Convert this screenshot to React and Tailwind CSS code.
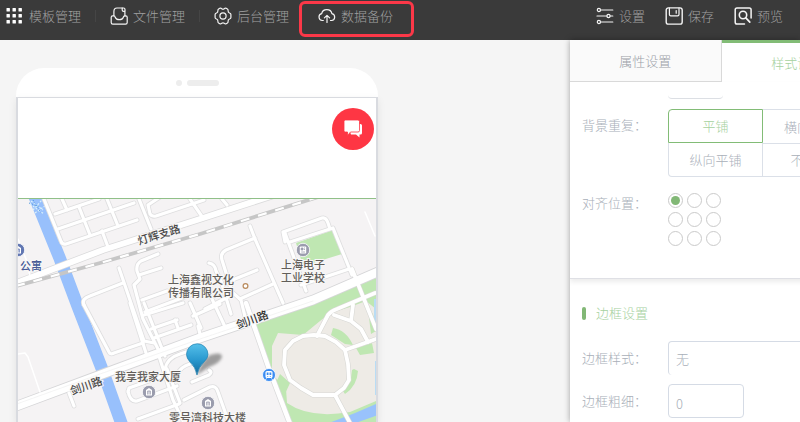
import React from 'react';

const Svg = ({ children }) => (
  <svg viewBox="0 0 18 18" className="size-[18px] shrink-0" fill="none" stroke="#f4f4f4" strokeWidth="1.2" strokeLinecap="round" strokeLinejoin="round" aria-hidden="true">
    {children}
  </svg>
);

const GridIcon = () => (
  <Svg>
    {[1, 7, 13].map((y) => [0, 6, 12].map((x) => (
      <rect key={`${x}-${y}`} x={x + 0.5} y={y} width="3.4" height="3.4" rx="0.5" fill="#fff" stroke="none" />
    )))}
  </Svg>
);
const InboxIcon = () => (
  <Svg>
    <path d="M3.900 8.900H2.600Q1.200 8.900 1.200 10.300V15.600Q1.200 17.200 2.800 17.200H15.600Q17.200 17.200 17.200 15.600V10.300Q17.200 8.900 15.800 8.900H14.800Q13.600 8.900 13.200 10.500Q12.400 12.700 9.300 12.700T5.300 10.500Q5 8.900 3.900 8.900V4.500Q3.900 1 7 1H12.200" />
    <path d="M14.900 8.900V4.800M12.200 1H13.500Q15 1 15 2.500V4.400H13.600Q12.200 4.400 12.200 3Z" />
  </Svg>
);
const GearIcon = () => (
  <Svg>
    <path d="M5.800 1.300Q6.800 0.800 7.700 1.700Q9 2.700 10.300 1.700Q11.200 0.800 12.200 1.300L13.400 2Q14.300 2.600 14.100 3.800Q14 5.400 15.500 6Q16.900 6.400 16.900 7.600V10.400Q16.900 11.600 15.500 12Q14 12.600 14.100 14.200Q14.300 15.400 13.400 16L12.200 16.700Q11.200 17.200 10.300 16.300Q9 15.300 7.700 16.300Q6.800 17.200 5.800 16.700L4.600 16Q3.700 15.400 3.900 14.200Q4 12.600 2.500 12Q1.100 11.600 1.100 10.400V7.600Q1.100 6.400 2.500 6Q4 5.400 3.900 3.800Q3.700 2.600 4.600 2Z" />
    <circle cx="9" cy="9" r="3.100" />
  </Svg>
);
const CloudIcon = () => (
  <Svg>
    <path d="M5.300 13.500H4.300A3.500 3.500 0 0 1 3.700 6.600Q4.400 2.600 8.800 2.600T13.900 6.600A3.500 3.500 0 0 1 13.600 13.500H12.500M9 15.500V8.600M6.400 10.900L9 8.400L11.600 10.900" />
  </Svg>
);
const SlidersIcon = () => (
  <Svg>
    <path d="M4.500 3H16.800M1 9H11M14 9H16.800M4.500 15H16.800" />
    <circle cx="2.900" cy="3" r="1.600" /><circle cx="12.500" cy="9" r="1.600" /><circle cx="2.900" cy="15" r="1.600" />
  </Svg>
);
const SaveIcon = () => (
  <Svg>
    <rect x="1.200" y="0.900" width="16" height="16.200" rx="2.200" strokeWidth="1.400" />
    <path d="M4.400 1.200V7.500Q4.400 8.900 5.800 8.900H12.600Q14 8.900 14 7.500V1.200M11.200 3.500V6.200" />
  </Svg>
);
const PreviewIcon = () => (
  <Svg>
    <path strokeWidth="1.500" d="M10.500 17H3Q1.200 17 1.200 15.200V2.700Q1.200 0.900 3 0.900H15.300Q17.100 0.900 17.100 2.700V11" />
    <circle cx="9" cy="8" r="3.700" strokeWidth="1.600" />
    <path strokeWidth="1.700" d="M11.800 10.900L15.800 15.200" />
  </Svg>
);

const leftNav = [
  { label: '模板管理', Icon: GridIcon, divider: true },
  { label: '文件管理', Icon: InboxIcon, divider: true },
  { label: '后台管理', Icon: GearIcon },
  { label: '数据备份', Icon: CloudIcon, marked: true },
];
const rightNav = [
  { label: '设置', Icon: SlidersIcon },
  { label: '保存', Icon: SaveIcon },
  { label: '预览', Icon: PreviewIcon },
];

function Header() {
  return (
    <header className="flex h-10 shrink-0 items-start justify-between bg-[#3a3a3a] pl-1.5 pr-[17px] text-[#a0a0a0]">
      <nav className="flex">
        {leftNav.map(({ label, Icon, divider, marked }) => (
          <div key={label} className="relative flex h-8 w-[104px] items-center">
            <button className="flex items-center gap-[5px] whitespace-nowrap"><Icon />{label}</button>
            {divider && <span className="ml-auto mr-3.5 h-3 w-px bg-[#454545]" />}
            {marked && <span className="pointer-events-none absolute -left-[19px] top-px h-9 w-[115px] rounded-md border-3 border-[#fb3848]" />}
          </div>
        ))}
      </nav>
      <div className="flex h-8 items-center gap-5">
        {rightNav.map(({ label, Icon }) => (
          <button key={label} className="flex items-center gap-[5px] whitespace-nowrap"><Icon />{label}</button>
        ))}
      </div>
    </header>
  );
}

const minorRoads = [
  'M44 198L61 240Q62 244 66 243L137 219',
  'M62 198L67 209M55 213L99 198M58 228L134 202M79 206L90 234M107 198L118 225M102 230L108 246',
  'M139 198L151 228M160 196L148 204L150 213Q152 216 156 215L204 199M190 198L203 217',
  'M222 198L227 204M217 212L260 198',
  'M119 267L144 340L154 342M84 304Q81 298 90 295L123 282',
  'M158 253L141 260Q136 263 137 270L140 278L134 284L143 318L158 348M161 267L139 274M142 299L167 290M145 311L190 294',
  'M250 225L255 238L283 302M255 237L226 249Q220 252 222 259L232 291L241 299L246 320',
  'M209 262Q215 263 216 270L221 280M257 269L230 280M240 298L273 283M221 280L231 313M205 308L232 294',
  'M285 241L283 231L322 217Q326 216 328 222L330 228M290 241L333 227L352 274M285 232L306 290M301 284L349 268',
  'M84 304L109 351Q110 354 114 352L143 342',
  'M130 302L146 352M144 302L165 355M144 314L183 302M151 328L177 319M154 337L191 324M175 319L178 327M190 302L201 327',
  'M193 315L220 303M198 325L201 337M212 298L227 330',
  'M159 355L173 399L184 422M165 368Q167 357 180 353L192 349M177 374Q180 366 190 363L205 357M192 381L209 374Q213 371 209 369',
  'M69 392L74 405M128 391L129 387L160 376M128 390Q130 401 137 400L177 385M138 418L179 403M184 399L210 386Q216 384 218 391L229 422',
  'M167 368L180 402',
];

const campusRoads = [
  'M303 335L314 334L325 335L336 341L345 349L348 363L349 379L344 387L335 394H313L301 387L290 379L284 364L285 349L293 340Z',
  'M317 335L328 314Q331 310 337 308L375 292M334 314L351 320L361 328L368 341M351 320L353 304M345 349L376 338M352 268L376 328M335 394L350 422',
];

const mapLabels = [
  { x: 168, y: 283, t: '上海鑫视文化' },
  { x: 168, y: 296, t: '传播有限公司' },
  { x: 281, y: 268, t: '上海电子' },
  { x: 281, y: 281, t: '工业学校' },
  { x: 115, y: 380, t: '我享我家大厦' },
  { x: 169, y: 421, t: '零号湾科技大楼' },
];

const Poi = ({ x, y, color = '#9a9cad' }) => (
  <g transform={`translate(${x} ${y})`}>
    <circle r="6.700" fill={color} stroke="#fff" strokeWidth="0.800" />
    <path d="M-3 3.500V-2L0 -4L3 -2V3.500Z" fill="#fff" />
    <path d="M-1.400 2.500V-1H1.400V2.500M0 -1V2.500" stroke={color} strokeWidth="0.800" fill="none" />
  </g>
);

const SchoolPoi = ({ x, y }) => (
  <g transform={`translate(${x} ${y})`}>
    <circle r="6.700" fill="#9a9cad" stroke="#fff" strokeWidth="0.800" />
    <rect x="-3.200" y="-3.600" width="6.400" height="7.200" rx="0.800" fill="#fff" />
    <path d="M-1.800 -2H0V0H-1.800ZM1 -2H2M1 -0.500H2M-1.800 2H2" stroke="#9a9cad" strokeWidth="0.800" fill="#9a9cad" />
  </g>
);

function CityMap() {
  return (
    <svg viewBox="18 198 358 224" className="block w-full" role="img" aria-label="地图">
      <defs>
        <linearGradient id="pin" x1="0" y1="0" x2="0" y2="1">
          <stop offset="0" stopColor="#55c0ea" />
          <stop offset="0.500" stopColor="#2b9ad0" />
          <stop offset="1" stopColor="#126a9c" />
        </linearGradient>
        <filter id="soft"><feGaussianBlur stdDeviation="1.600" /></filter>
      </defs>
      <rect x="18" y="198" width="358" height="224" fill="#f5f3f4" />
      <path d="M296 242L333 229L342 253L303 265Z" fill="#bfe7b2" />
      <path d="M255 322L376 277V422H288Z" fill="#bfe7b2" />
      <path d="M278 332L303 334L320 320L330 312L350 306L366 300L376 308V400L350 411Q310 418 287 402L286 388L272 373L272 345Z" fill="#eeebe6" />
      <path d="M333 327Q346 329 353 344L345 343L331 334ZM356 347L372 342L374 352L360 354ZM354 368L358 370Q357 385 345 393L343 390Q351 384 352 369ZM275 384L280 373L290 382L284 395ZM368 308L373 313L376 330L371 333Z" fill="#bfe7b2" />
      <path d="M323 424Q352 414 378 402V414L350 424Z" fill="#99c2fc" />
      <path d="M375 298V326M376 360V394" stroke="#b9dcf4" strokeWidth="2" />
      <path d="M34 194L60 258L78 306L102 368L122 424" fill="none" stroke="#98c0fc" strokeWidth="12.500" />
      <path d="M31 200L43 209M33 209L42 199M35 212L45 205M30 203L44 213" stroke="#d9f0fb" strokeWidth="1.200" strokeDasharray="2 1.500" />
      <path d="M33 199L41 212M29 202L40 206" stroke="#4b94d8" strokeWidth="1" strokeDasharray="1 2" />

      <g fill="none" strokeLinecap="round" strokeLinejoin="round">
        {minorRoads.map((d) => <path key={d} d={d} stroke="#dededf" strokeWidth="4.800" />)}
        {campusRoads.map((d) => <path key={d} d={d} stroke="#d8d8d5" strokeWidth="5" />)}
        <path d="M246 302L268 365L292 428" stroke="#dadadb" strokeWidth="6" />
        <path d="M14 283L103 249L200 218L280 192" stroke="#dadadb" strokeWidth="7.500" />
        <path d="M14 406L100 374L200 337L313 299L380 270" stroke="#d6d6d8" strokeWidth="10.500" />
        {minorRoads.map((d) => <path key={d} d={d} stroke="#fff" strokeWidth="3.200" />)}
        {campusRoads.map((d) => <path key={d} d={d} stroke="#fff" strokeWidth="3.800" />)}
        <path d="M246 302L268 365L292 428" stroke="#fff" strokeWidth="4.500" />
        <path d="M14 283L103 249L200 218L280 192" stroke="#fff" strokeWidth="6" />
        <path d="M14 406L100 374L200 337L313 299L380 270" stroke="#fff" strokeWidth="8.800" />
        <path d="M18 353L25 352L28 356L40 391M18 238L26 258L31 279M365 211L375 235" stroke="#fff" strokeWidth="1.500" />
        <path d="M14 404L100 373L200 338L313 300" stroke="#efefef" strokeWidth="0.700" />
      </g>
      <path d="M16 285L100 262L200 233L318 196" fill="none" stroke="#c6c6c6" strokeWidth="3.800" />
      <path d="M16 285L100 262L200 233L318 196" fill="none" stroke="#fff" strokeWidth="2.200" strokeDasharray="9 9" />

      <SchoolPoi x={303} y={249} />
      <Poi x={149} y={391} />
      <Poi x={208} y={402} />
      <Poi x={18} y={249} color="#6277b2" />
      <circle cx="245.500" cy="285" r="2.400" fill="#fff" stroke="#b98a5c" strokeWidth="1.200" />
      <g transform="translate(269 374)">
        <circle r="6.500" fill="#3b8cf2" stroke="#fff" strokeWidth="0.800" />
        <rect x="-3.500" y="-4" width="7" height="7" rx="1.500" fill="#fff" />
        <path d="M-2.300 -2.500H-0.500V0H-2.300ZM0.500 -2.500H2.300V0H0.500ZM-1.800 1.200H-0.800V2H-1.800ZM0.800 1.200H1.800V2H0.800Z" fill="#3b8cf2" />
        <path d="M-2.500 3.500L-3.500 4.800M2.500 3.500L3.500 4.800" stroke="#fff" />
      </g>

      <g className="font-['Noto_Sans_CJK_SC',sans-serif] text-[11px] font-medium" fill="#625e5a" stroke="#f8f7f6" strokeWidth="2" paintOrder="stroke">
        {mapLabels.map(({ x, y, t }) => <text key={t} x={x} y={y}>{t}</text>)}
        <text x="20" y="269" fill="#475b96">公寓</text>
        <g fill="#484848">
          <text transform="translate(139 244) rotate(-17)">灯辉支路</text>
          <text transform="translate(72 394) rotate(-19)">剑川路</text>
          <text transform="translate(238 328) rotate(-20)" fill="#2f2f2f">剑川路</text>
        </g>
      </g>

      <path d="M197 374Q201 360 210 354Q222 350 222 356Q220 362 209 366Z" fill="#555" opacity="0.550" filter="url(#soft)" />
      <path d="M197 374Q195.500 366 190 361Q186.500 357 186.500 353.500A10.700 10.700 0 0 1 208 353.500Q208 357 204 361Q198.500 366 197 374Z" fill="url(#pin)" stroke="#2482b2" strokeWidth="0.700" />
    </svg>
  );
}

function Phone() {
  return (
    <div className="w-[362px]">
      <div className="flex h-[29px] items-center justify-center gap-[5px] rounded-t-[28px] bg-white">
        <span className="size-1.5 rounded-full bg-[#ededed]" />
        <span className="h-1.5 w-8 rounded-full bg-[#ededed]" />
      </div>
      <div className="border-x-2 border-t border-[#d9dbe0] bg-white shadow-[0_3px_8px_rgba(0,0,0,0.08)]">
        <div className="flex h-[100px] items-start justify-end pr-0.5 pt-2.5">
          <button aria-label="在线客服" className="flex size-[42px] items-center justify-center rounded-full bg-[#fe3644]">
            <svg viewBox="0 0 20 20" className="size-5" aria-hidden="true">
              <path d="M4 5H17.500Q19 5 19 6.500V14Q19 15.500 17.500 15.500H16.500V18.500L13 15.500H8Z" fill="#fff" />
              <path d="M2.500 1H15Q16.500 1 16.500 2.500V11.500Q16.500 13 15 13H7.500L4.500 16.500V13H2.500Q1 13 1 11.500V2.500Q1 1 2.500 1Z" fill="#fff" stroke="#fe3644" strokeWidth="0.800" />
            </svg>
          </button>
        </div>
        <div className="border-t border-[#90c088]">
          <CityMap />
        </div>
      </div>
    </div>
  );
}

const repeats = [
  { label: '平铺', look: 'rounded-tl border-[#82bc76] text-[#a6d19e]' },
  { label: '横向平铺', look: 'rounded-tr border-l-0 border-b-0 border-[#dbe0e8]' },
  { label: '纵向平铺', look: 'rounded-bl border-t-0 border-[#dbe0e8]' },
  { label: '不平铺', look: 'rounded-br border-l-0 border-[#dbe0e8]' },
];
const positions = ['左上', '中上', '右上', '左中', '居中', '右中', '左下', '中下', '右下'];

function StylePanel() {
  return (
    <aside className="z-10 w-[230px] shrink-0 overflow-hidden bg-white text-[#a9afb9] shadow-[0_0_6px_rgba(0,0,0,0.35)]">
      <div className="w-[303px]">
        <div role="tablist" className="grid h-[42px] grid-cols-2">
          <button role="tab" aria-selected="false" className="border-b border-r border-[#d9d9d9] bg-[#fafafa] text-[#9a9fa8]">属性设置</button>
          <button role="tab" aria-selected="true" className="border-t-3 border-[#82bc76] text-[#a6d19e]">样式设置</button>
        </div>

        <section className="h-[197px] border-b border-[#dfe0e5] pl-3 pt-3 shadow-[0_3px_5px_rgba(0,0,0,0.08)]">
          <div className="ml-[86px] h-[5px] w-[55px] rounded-b border-b border-[#dcdfe4]" />
          <div className="mt-2.5 flex">
            <span id="repeat" className="w-[86px] pt-1.5">背景重复：</span>
            <div role="group" aria-labelledby="repeat" className="grid w-[190px] grid-cols-2 grid-rows-2">
              {repeats.map(({ label, look }, i) => (
                <button key={label} aria-pressed={i === 0} className={`h-[34px] border ${look}`}>{label}</button>
              ))}
            </div>
          </div>
          <fieldset className="mt-4 flex">
            <span className="w-[86px]">对齐位置：</span>
            <div className="grid grid-cols-3 gap-1">
              {positions.map((p, i) => (
                <input
                  key={p}
                  type="radio"
                  name="position"
                  aria-label={p}
                  defaultChecked={i === 0}
                  className="size-[15px] appearance-none rounded-full border border-[#cacaca] bg-white bg-clip-content p-[2px] checked:bg-[#82b876]"
                />
              ))}
            </div>
          </fieldset>
        </section>

        <section className="pl-3 pt-6">
          <h2 className="flex items-center gap-2.5 text-[#a6d19e]">
            <span className="h-[13px] w-1 rounded-full bg-[#82b876]" />
            边框设置
          </h2>
          <div className="mt-[18px] flex items-center">
            <label htmlFor="style" className="w-[86px]">边框样式：</label>
            <select id="style" className="h-[34px] w-[190px] appearance-none rounded border border-b-0 border-[#d5dbe5] bg-white px-[7px]">
              <option>无</option>
            </select>
          </div>
          <div className="mt-[9px] flex items-center">
            <label htmlFor="width" className="w-[86px]">边框粗细：</label>
            <input id="width" defaultValue="0" className="h-[34px] w-[76px] rounded border border-[#d5dbe5] px-[7px] pt-1" />
          </div>
        </section>
      </div>
    </aside>
  );
}

export default function App() {
  return (
    <div className="flex h-screen flex-col overflow-hidden bg-[#f5f5f5] font-['Noto_Sans_CJK_SC',sans-serif] text-[13px] leading-5 font-light">
      <Header />
      <main className="flex min-h-0 flex-1">
        <div className="min-w-0 flex-1 overflow-hidden pl-4 pt-7">
          <Phone />
        </div>
        <StylePanel />
      </main>
    </div>
  );
}
